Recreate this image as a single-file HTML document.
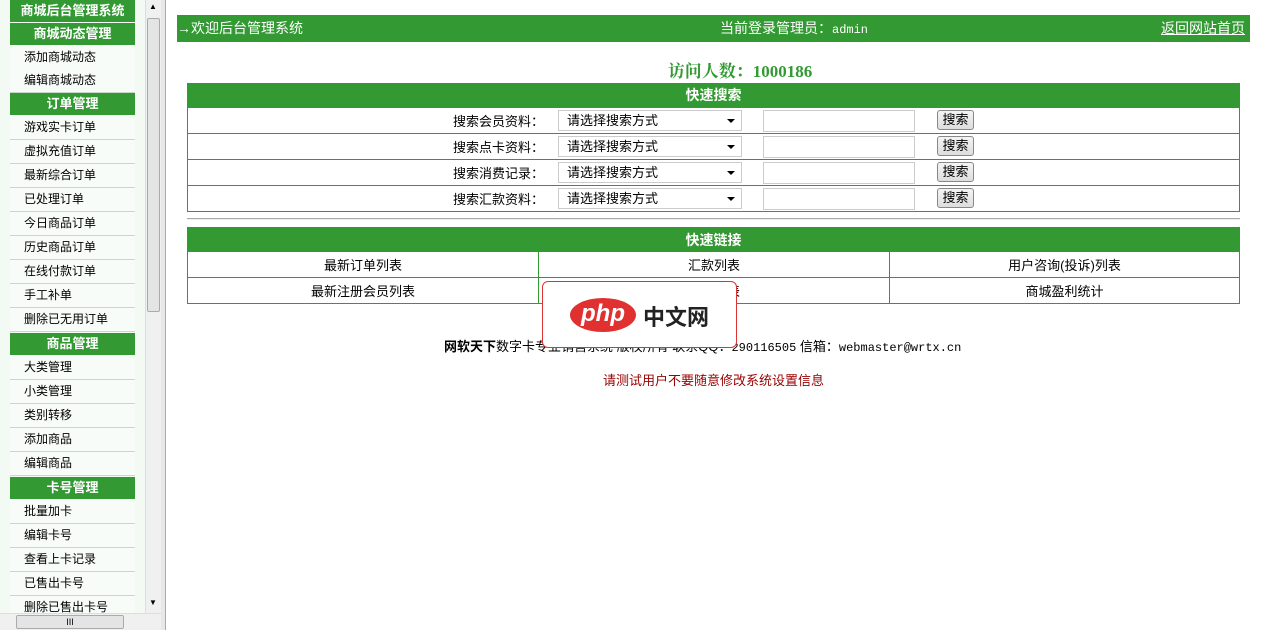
<!DOCTYPE html>
<html><head><meta charset="utf-8"><style>
*{margin:0;padding:0;box-sizing:border-box}
body{width:1280px;height:630px;overflow:hidden;background:#fff;font-family:"Liberation Sans","Noto Sans CJK SC","WenQuanYi Zen Hei",sans-serif;font-size:12px;color:#000;position:relative}
.a{position:absolute}
#side{left:0;top:0;width:145px;height:615px;background:#f3faf3;overflow:hidden}
.h{position:absolute;left:10px;width:125px;background:#339933;color:#fff;font-weight:bold;text-align:center;font-size:13px;line-height:22px;height:22px}
.i{position:absolute;left:10px;width:125px;height:24px;line-height:23px;background:#f8fcf8;border-bottom:1px solid #c8d8c8;padding-left:14px;font-size:12px}
#vs{left:145px;top:0;width:16px;height:615px;background:#f0f0f0;border-left:1px solid #ddd}
#hs{left:0;top:613px;width:161px;height:17px;background:#f0f0f0;border-top:1px solid #ddd}
#div{left:161px;top:0;width:5px;height:630px;background:#e8e8e8;border-right:1px solid #aaa}
.g{background:#339933;color:#fff}
table{border-collapse:collapse}
td{border:1px solid #339933;height:26px;font-size:13px}
.row{position:absolute;left:187px;width:1053px;height:27px;border:1px solid #339933;font-size:13px}
.row span{position:absolute}
.lb{left:265px;top:3px}
.sel{left:370px;top:2px;width:184px;height:21px;border:1px solid #ccc;line-height:19px;padding-left:8px}
.sel:after{content:"";position:absolute;right:6px;top:8px;border:4px solid transparent;border-top:4px solid #000}
.inp{left:575px;top:2px;width:152px;height:22px;border:1px solid #ccc}
.btn{left:749px;top:2px;width:37px;height:20px;border:1px solid #888;border-radius:3px;background:linear-gradient(#f4f4f4,#ddd);text-align:center;line-height:18px}
</style></head><body>
<div class="a" id="side">
<div class="h" style="top:0;height:22px">商城后台管理系统</div>
<div class="h" style="top:23px">商城动态管理</div>
<div class="i" style="top:46px">添加商城动态</div>
<div class="i" style="top:69px">编辑商城动态</div>
<div class="h" style="top:93px">订单管理</div>
<div class="i" style="top:116px">游戏实卡订单</div>
<div class="i" style="top:140px">虚拟充值订单</div>
<div class="i" style="top:164px">最新综合订单</div>
<div class="i" style="top:188px">已处理订单</div>
<div class="i" style="top:212px">今日商品订单</div>
<div class="i" style="top:236px">历史商品订单</div>
<div class="i" style="top:260px">在线付款订单</div>
<div class="i" style="top:284px">手工补单</div>
<div class="i" style="top:308px">删除已无用订单</div>
<div class="h" style="top:333px">商品管理</div>
<div class="i" style="top:356px">大类管理</div>
<div class="i" style="top:380px">小类管理</div>
<div class="i" style="top:404px">类别转移</div>
<div class="i" style="top:428px">添加商品</div>
<div class="i" style="top:452px">编辑商品</div>
<div class="h" style="top:477px">卡号管理</div>
<div class="i" style="top:500px">批量加卡</div>
<div class="i" style="top:524px">编辑卡号</div>
<div class="i" style="top:548px">查看上卡记录</div>
<div class="i" style="top:572px">已售出卡号</div>
<div class="i" style="top:596px">删除已售出卡号</div>
</div>
<div class="a" id="vs"><div class="a" style="left:1px;top:18px;width:13px;height:294px;background:#e4e4e4;border:1px solid #aaa;border-radius:2px"></div><div class="a" style="left:3px;top:2px;font-size:8px">▲</div><div class="a" style="left:3px;top:598px;font-size:8px">▼</div></div>
<div class="a" id="hs"><div class="a" style="left:16px;top:1px;width:108px;height:14px;background:#e4e4e4;border:1px solid #aaa;border-radius:2px;text-align:center;font-size:9px;line-height:12px">III</div></div>
<div class="a" id="div"></div>

<div class="a g" style="left:177px;top:15px;width:1073px;height:27px;font-size:14px;line-height:27px">
<span class="a" style="left:0">→欢迎后台管理系统</span>
<span class="a" style="left:543px">当前登录管理员：<span style="font-family:'Liberation Mono',monospace;font-size:12px">admin</span></span>
<span class="a" style="left:984px;text-decoration:underline">返回网站首页</span>
</div>
<div class="a" style="left:560px;top:57px;width:360px;text-align:center;color:#339933;font-weight:bold;font-size:17px;font-family:'Liberation Serif','Noto Serif CJK SC',serif">访问人数：1000186</div>

<div class="a g" style="left:187px;top:83px;width:1053px;height:25px;text-align:center;font-weight:bold;font-size:14px;line-height:25px">快速搜索</div>
<div class="row" style="top:107px"><span class="lb">搜索会员资料：</span><span class="sel">请选择搜索方式</span><span class="inp"></span><span class="btn">搜索</span></div>
<div class="row" style="top:133px"><span class="lb">搜索点卡资料：</span><span class="sel">请选择搜索方式</span><span class="inp"></span><span class="btn">搜索</span></div>
<div class="row" style="top:159px"><span class="lb">搜索消费记录：</span><span class="sel">请选择搜索方式</span><span class="inp"></span><span class="btn">搜索</span></div>
<div class="row" style="top:185px"><span class="lb">搜索汇款资料：</span><span class="sel">请选择搜索方式</span><span class="inp"></span><span class="btn">搜索</span></div>
<div class="a" style="left:187px;top:218px;width:1053px;height:2px;border-top:1px solid #aaa;border-bottom:1px solid #eee"></div>

<table class="a" style="left:187px;top:227px;width:1053px;text-align:center">
<tr><td colspan="3" class="g" style="height:24px;font-weight:bold;font-size:14px">快速链接</td></tr>
<tr><td style="width:351px">最新订单列表</td><td style="width:351px">汇款列表</td><td>用户咨询(投诉)列表</td></tr>
<tr><td>最新注册会员列表</td><td>会员列表</td><td>商城盈利统计</td></tr>
</table>

<div class="a" style="left:444px;top:336px;font-size:13px;white-space:nowrap"><b>网软天下</b>数字卡专业销售系统 版权所有 联系QQ：<span style="font-family:'Liberation Mono',monospace;font-size:12px">290116505</span> 信箱：<span style="font-family:'Liberation Mono',monospace;font-size:12px">webmaster@wrtx.cn</span></div>
<div class="a" style="left:187px;top:370px;width:1053px;text-align:center;color:#990000;font-size:13px">请测试用户不要随意修改系统设置信息</div>

<div class="a" style="left:542px;top:281px;width:195px;height:67px;background:#fff;border:1px solid #d33;border-radius:6px">
<div class="a" style="left:27px;top:16px;width:66px;height:34px;border-radius:50%;background:#e03030;color:#fff;font-weight:bold;font-style:italic;font-size:24px;line-height:32px;text-align:center">php</div>
<div class="a" style="left:100px;top:18px;font-size:22px;font-weight:bold;color:#222">中文网</div>
</div>
</body></html>
